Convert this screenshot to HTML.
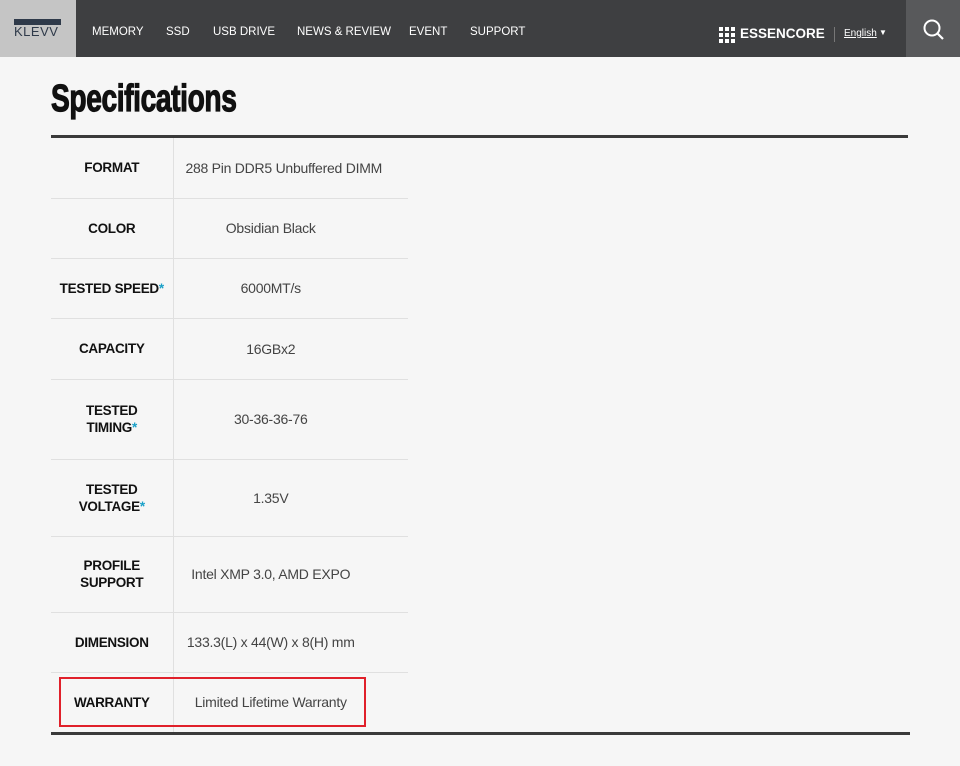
<!DOCTYPE html>
<html><head><meta charset="utf-8"><style>
*{margin:0;padding:0;box-sizing:border-box}
body{width:960px;height:766px;background:#f6f6f6;font-family:"Liberation Sans",sans-serif;position:relative;overflow:hidden}
.nav{position:absolute;left:0;top:0;width:960px;height:57px;background:#3e3f41}
.logo{position:absolute;left:0;top:0;width:76px;height:57px;background:#c5c5c5}
.logo .bar{position:absolute;left:14px;top:19px;width:47px;height:6px;background:#2f3a4a}
.logo .t{position:absolute;left:14px;top:24px;font-size:13px;color:#2f3a4a;letter-spacing:0.5px}
.nav a{position:absolute;top:26px;color:#fff;font-size:11.5px;text-decoration:none}
.srch{position:absolute;left:906px;top:0;width:54px;height:57px;background:#58595b}
h1{position:absolute;left:51px;top:78px;font-size:38px;font-weight:900;font-family:"Liberation Sans Narrow","Liberation Sans",sans-serif;color:#111;transform:scaleX(0.74);transform-origin:left;letter-spacing:-0.5px;-webkit-text-stroke:1.2px #111;white-space:nowrap}
.rule{position:absolute;left:51px;height:3px;background:#3a3a3a}
table{position:absolute;left:51px;top:138px;border-collapse:collapse;width:357px}
td{border-bottom:1px solid #e0e0e0;font-size:14px;color:#444;text-align:center;vertical-align:middle;letter-spacing:-0.25px;padding-right:40px}
td.l{width:122px;font-weight:bold;font-size:13.5px;color:#111;border-right:1px solid #e0e0e0;line-height:17px;letter-spacing:-0.3px;padding-right:0}
.s{color:#1aa0c8}
.red{position:absolute;left:59px;top:677px;width:307px;height:50px;border:2px solid #e0202a}
</style></head><body>
<div class="nav">
<div class="logo"><div class="bar"></div><div class="t">KLEVV</div></div>
<a style="left:92px">MEMORY</a><a style="left:166px">SSD</a><a style="left:213px">USB DRIVE</a><a style="left:297px">NEWS &amp; REVIEW</a><a style="left:409px">EVENT</a><a style="left:470px">SUPPORT</a>
<svg style="position:absolute;left:719px;top:27px" width="16" height="16"><g fill="#fff"><rect x="0" y="0" width="4" height="4"/><rect x="6" y="0" width="4" height="4"/><rect x="12" y="0" width="4" height="4"/><rect x="0" y="6" width="4" height="4"/><rect x="6" y="6" width="4" height="4"/><rect x="12" y="6" width="4" height="4"/><rect x="0" y="12" width="4" height="4"/><rect x="6" y="12" width="4" height="4"/><rect x="12" y="12" width="4" height="4"/></g></svg>
<span style="position:absolute;left:740px;top:26px;color:#fff;font-size:13.5px;font-weight:bold">ESSENCORE</span>
<div style="position:absolute;left:834px;top:27px;width:1px;height:15px;background:#777"></div>
<span style="position:absolute;left:844px;top:28px;color:#fff;font-size:10px;text-decoration:underline">English</span>
<span style="position:absolute;left:879px;top:28px;color:#fff;font-size:8px">▼</span>
<div class="srch"><svg style="position:absolute;left:16px;top:18px" width="24" height="24"><circle cx="10" cy="10" r="7.5" stroke="#fff" stroke-width="2" fill="none"/><line x1="15.5" y1="15.5" x2="21" y2="21" stroke="#fff" stroke-width="2.2"/></svg></div>
</div>
<h1>Specifications</h1>
<div class="rule" style="top:135px;width:857px"></div>
<table>
<tr style="height:60px"><td class="l">FORMAT</td><td style="padding-right:14px">288 Pin DDR5 Unbuffered DIMM</td></tr>
<tr style="height:60px"><td class="l">COLOR</td><td>Obsidian Black</td></tr>
<tr style="height:60px"><td class="l">TESTED SPEED<span class="s">*</span></td><td>6000MT/s</td></tr>
<tr style="height:61px"><td class="l">CAPACITY</td><td>16GBx2</td></tr>
<tr style="height:80px"><td class="l">TESTED<br>TIMING<span class="s">*</span></td><td>30-36-36-76</td></tr>
<tr style="height:77px"><td class="l">TESTED<br>VOLTAGE<span class="s">*</span></td><td>1.35V</td></tr>
<tr style="height:76px"><td class="l">PROFILE<br>SUPPORT</td><td>Intel XMP 3.0, AMD EXPO</td></tr>
<tr style="height:60px"><td class="l">DIMENSION</td><td>133.3(L) x 44(W) x 8(H) mm</td></tr>
<tr style="height:60px"><td class="l" style="border-bottom:none">WARRANTY</td><td style="border-bottom:none">Limited Lifetime Warranty</td></tr>
</table>
<div class="rule" style="top:732px;width:859px"></div>
<div class="red"></div>
</body></html>
